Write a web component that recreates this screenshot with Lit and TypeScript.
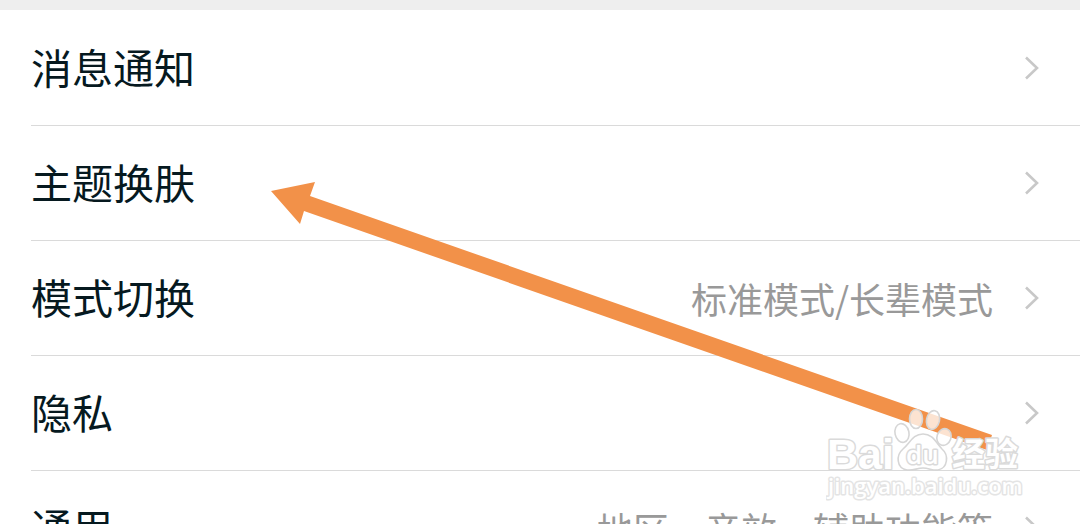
import { LitElement, html, css, nothing } from "lit";
import { customElement, property } from "lit/decorators.js";

interface Setting {
  label: string;
  value?: string;
}

const SETTINGS: Setting[] = [
  { label: "消息通知" },
  { label: "主题换肤" },
  { label: "模式切换", value: "标准模式/长辈模式" },
  { label: "隐私" },
  { label: "通用", value: "地区、音效、辅助功能等" },
];

@customElement("setting-row")
class SettingRow extends LitElement {
  @property() label = "";
  @property() value = "";

  static styles = css`
    :host {
      display: block;
    }
    .row {
      display: flex;
      align-items: center;
      gap: 32px;
      box-sizing: border-box;
      width: 100%;
      min-height: 114px;
      margin: 0;
      padding: 0 41px 0 0;
      border: 0;
      background: none;
      font-family: "Noto Sans CJK SC", sans-serif;
      text-align: left;
      cursor: pointer;
    }
    .label {
      flex: 1;
      padding-bottom: 4px;
      font-size: 41px;
      line-height: 60px;
      color: #06191f;
    }
    .value {
      font-size: 36px;
      line-height: 52px;
      color: #999;
    }
    .chevron {
      flex: none;
      width: 14px;
      height: 24px;
      fill: none;
      stroke: #c8c8c8;
      stroke-width: 2.6;
    }
  `;

  render() {
    return html`
      <button class="row" type="button">
        <span class="label">${this.label}</span>
        ${this.value ? html`<span class="value">${this.value}</span>` : nothing}
        <svg class="chevron" viewBox="0 0 14 24" aria-hidden="true">
          <path d="M1 1.5 12 12 1 22.5" />
        </svg>
      </button>
    `;
  }
}

@customElement("pointer-arrow")
class PointerArrow extends LitElement {
  static styles = css`
    :host {
      display: block;
      pointer-events: none;
    }
    .arrow {
      display: block;
      width: 100%;
      fill: #f29149;
    }
  `;

  render() {
    return html`
      <svg class="arrow" viewBox="0 0 722 269" aria-hidden="true">
        <path d="M0 9 44 0 39 14 721 253 716 268 33 29 29 42Z" />
      </svg>
    `;
  }
}

@customElement("site-watermark")
class SiteWatermark extends LitElement {
  static styles = css`
    :host {
      display: block;
      pointer-events: none;
    }
    .mark {
      display: block;
      width: 100%;
    }
    .shape {
      fill: #fff;
      fill-opacity: 0.75;
      stroke: #d6d6d6;
      stroke-width: 1.6;
    }
    .type {
      fill: #fff;
      stroke: #dadada;
      stroke-width: 3;
      stroke-linejoin: round;
      paint-order: stroke;
      font-family: "Liberation Sans", sans-serif;
      font-weight: 700;
    }
    .name {
      font-size: 43px;
    }
    .du {
      font-family: "Open Sans", sans-serif;
      font-weight: 600;
      font-size: 26px;
    }
    .hanzi {
      font-family: "Noto Sans CJK SC", sans-serif;
      font-size: 33px;
    }
    .site {
      font-family: "Open Sans", sans-serif;
      font-weight: 600;
      font-size: 22px;
      stroke: #e4e4e4;
    }
  `;

  render() {
    return html`
      <svg class="mark" viewBox="0 0 200 96" role="img" aria-label="Baidu 经验">
        <text class="type name" x="1" y="61">Bai</text>
        <ellipse class="shape" cx="76" cy="25" rx="7" ry="9.5" transform="rotate(-12 76 25)" />
        <ellipse class="shape" cx="90" cy="11" rx="6.5" ry="9.5" />
        <ellipse class="shape" cx="107" cy="12" rx="6.5" ry="9.5" transform="rotate(12 107 12)" />
        <ellipse class="shape" cx="118" cy="29" rx="7" ry="8.5" transform="rotate(20 118 29)" />
        <path
          class="shape"
          d="M97 26C107 26 110 35 116 41C123 47 122 60 112 62C107 63 103 60 97 60C91 60 87 63 81 62C70 60 70 47 77 41C84 35 87 26 97 26Z"
        />
        <text class="type du" x="80" y="56">du</text>
        <text class="type hanzi" x="126" y="58">经验</text>
        <text class="type site" x="2" y="86">jingyan.baidu.com</text>
      </svg>
    `;
  }
}

@customElement("app-root")
class AppRoot extends LitElement {
  static styles = css`
    :host {
      display: block;
      position: relative;
      height: 100vh;
      overflow: hidden;
      background: #fff;
    }
    .band {
      height: 10px;
      background: #eee;
    }
    .list {
      margin: 0;
      padding: 0 0 0 31px;
      list-style: none;
    }
    .item {
      padding-top: 1px;
    }
    .item + .item {
      padding-top: 0;
      border-top: 1px solid #dadada;
    }
    .arrow {
      position: absolute;
      left: 271px;
      top: 182px;
      width: 722px;
    }
    .watermark {
      position: absolute;
      right: 54px;
      bottom: 20px;
      width: 200px;
    }
  `;

  render() {
    return html`
      <div class="band"></div>
      <ul class="list">
        ${SETTINGS.map(
          (s) => html`
            <li class="item">
              <setting-row .label=${s.label} .value=${s.value ?? ""}></setting-row>
            </li>
          `
        )}
      </ul>
      <pointer-arrow class="arrow"></pointer-arrow>
      <site-watermark class="watermark"></site-watermark>
    `;
  }
}
